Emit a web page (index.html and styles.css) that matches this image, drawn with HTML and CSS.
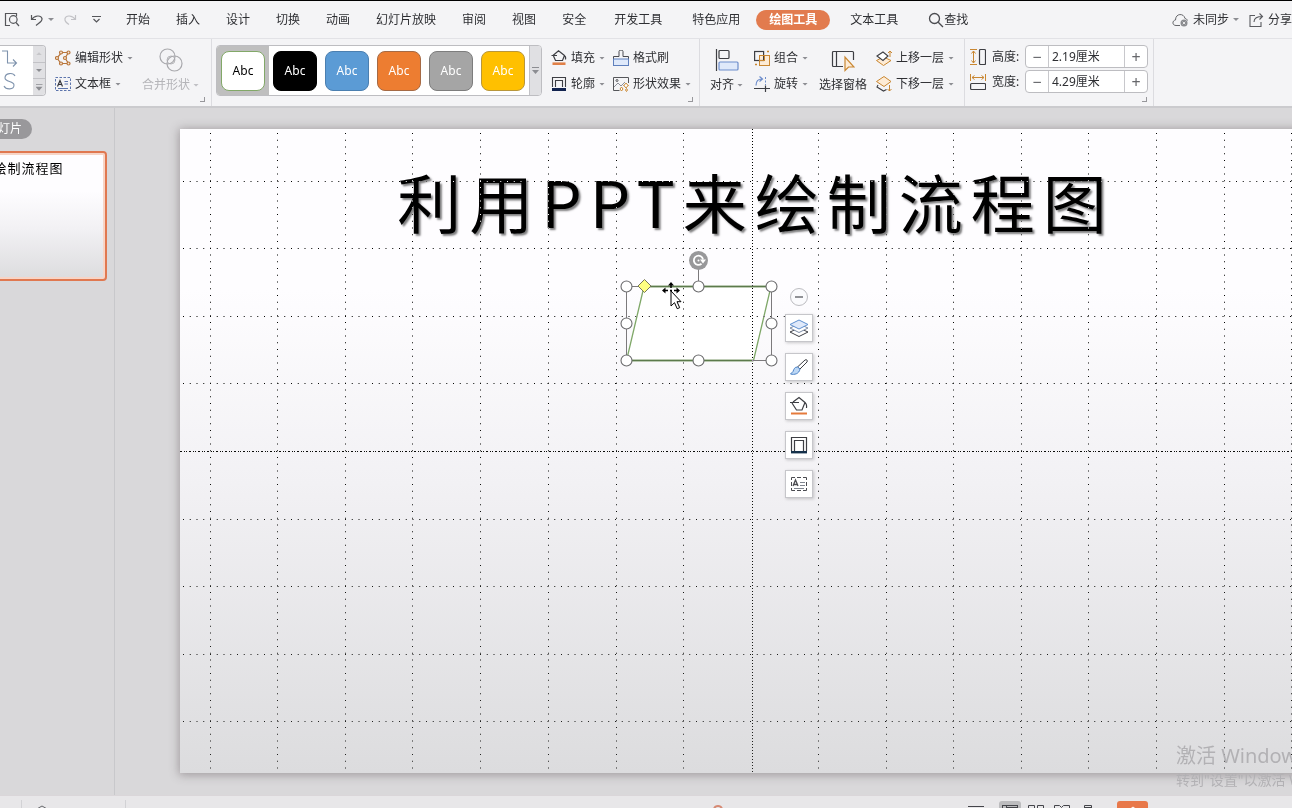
FILE: index.html
```html
<!DOCTYPE html>
<html lang="zh-CN">
<head>
<meta charset="utf-8">
<meta name="viewport" content="width=device-width, initial-scale=1">
<title>利用PPT来绘制流程图</title>
<link rel="stylesheet" href="styles.css">
</head>
<body>
<div class="app">
  <header class="menubar">
    <div class="quick">
      <button class="icon-btn" aria-label="打印预览"><svg width="16" height="16" viewBox="0 0 16 16" fill="none" stroke="#55565a" stroke-width="1.2"><path d="M6 13.5H1.5V1.5h11v3"/><circle cx="9.3" cy="7.5" r="3.8"/><path d="M12 10.5l3 3.5"/></svg></button>
      <button class="icon-btn undo" aria-label="撤销"><svg width="14" height="14" viewBox="0 0 14 14" fill="none" stroke="#55565a" stroke-width="1.2"><path d="M1.5 2v4.500h4.500M1.500 6.500C5 2 11 2 12 5.500c.6 3-3 4.500-6 7"/></svg><i class="caret"></i></button>
      <button class="icon-btn redo" aria-label="恢复"><svg width="14" height="14" viewBox="0 0 14 14" fill="none" stroke="#c2c2c6" stroke-width="1.2"><path d="M12.500 2v4.500H8M12.500 6.500C9 2 3 2 2 5.500c-.6 3 1.500 4.500 4 6"/></svg></button>
      <button class="icon-btn more" aria-label="自定义快速访问"><svg width="9" height="9" viewBox="0 0 9 9" fill="none" stroke="#55565a" stroke-width="1.200"><path d="M0 1.500h9M1.500 4l3 3 3-3"/></svg></button>
    </div>
    <nav class="tabs">
      <button class="tab">开始</button><button class="tab">插入</button><button class="tab">设计</button><button class="tab">切换</button><button class="tab">动画</button><button class="tab">幻灯片放映</button><button class="tab">审阅</button><button class="tab">视图</button><button class="tab">安全</button><button class="tab wide">开发工具</button><button class="tab wide">特色应用</button><button class="tab active">绘图工具</button><button class="tab wide">文本工具</button>
      <button class="tab find"><svg width="16" height="16" viewBox="0 0 16 16" fill="none" stroke="#4a4b50" stroke-width="1.300"><circle cx="6.500" cy="6.500" r="5"/><path d="M10.200 10.200L15 15"/></svg>查找</button>
    </nav>
    <div class="account">
      <button class="icon-btn"><svg width="17" height="14" viewBox="0 0 17 14" fill="none" stroke="#66676b"><path d="M8 12.500H4C0 12.500 0 7.500 3.500 7 3.500 0 12 0 13 5.500c1 0 2 .8 2.500 2"/><circle cx="12" cy="10" r="3.500" fill="#8a8b8f" stroke="none"/><path d="M10.700 8.700l2.600 2.600M13.300 8.700l-2.600 2.600" stroke="#fff" stroke-width=".8"/></svg><span>未同步</span><i class="caret"></i></button>
      <button class="icon-btn share"><svg width="15" height="14" viewBox="0 0 15 14" fill="none" stroke="#5a5b60" stroke-width="1.100"><path d="M6 2.500H1v11h11V9M5 9c0-4 3-5.500 8.500-5.500M10.500 .5l3 3-3 3"/></svg><span>分享</span></button>
    </div>
  </header>

  <section class="ribbon">
    <div class="group shapes">
      <div class="shape-box">
        <svg width="33" height="49" viewBox="0 0 33 49" fill="none" stroke="#7f93ad" stroke-width="1.100"><path d="M2 5h5.500v12h9M13 13.500l3.500 3.500-3.500 3.500"/><path d="M15 30c-2-4-10-3-10 2 0 4 9 3 9 7 0 5-8 5-10 1"/></svg>
        <div class="scroller"><button aria-label="上一行"><i class="caret up"></i></button><button aria-label="下一行"><i class="caret"></i></button><button aria-label="更多形状"><i class="caret lined"></i></button></div>
      </div>
      <div class="col edit-col">
        <button class="cmd"><svg width="16" height="16" viewBox="0 0 16 16" fill="none" stroke="#b8763c" stroke-width="1.200"><path d="M13.500 2.500h-7L2 8l4 5.500h7.500L10 8z"/><g fill="#fbe9d8"><circle cx="6" cy="2.500" r="1.500"/><circle cx="13.500" cy="2.500" r="1.500"/><circle cx="2" cy="8" r="1.500"/><circle cx="10" cy="8" r="1.500"/><circle cx="6" cy="13.500" r="1.500"/><circle cx="13.500" cy="13.500" r="1.500"/></g></svg><span>编辑形状</span><i class="caret"></i></button>
        <button class="cmd"><svg width="16" height="16" viewBox="0 0 16 16" fill="none" stroke="#5d75ad"><rect x=".5" y="1.500" width="15" height="13" stroke-dasharray="2.500 1.500"/><path d="M2.500 10.500L5 4.500l2.500 6M3.500 8.500h3" stroke="#33343a" stroke-width="1.200"/><path d="M9.500 5.500H13M9.500 8H13M3 12.500h10"/></svg><span>文本框</span><i class="caret"></i></button>
      </div>
      <button class="big disabled"><svg width="24" height="24" viewBox="0 0 24 24" fill="none" stroke="#a9a9ad" stroke-width="1.200"><circle cx="8.500" cy="8.500" r="7.500"/><circle cx="15.500" cy="15.500" r="7.500"/><circle cx="12" cy="12" r="4" stroke-width=".8"/></svg><span class="big-label">合并形状<i class="caret"></i></span></button>
      <i class="launcher"></i>
    </div>

    <div class="group styles">
      <div class="style-box">
        <div class="cell selected"><button class="swatch s-line">Abc</button></div>
        <div class="cell"><button class="swatch s-black">Abc</button></div>
        <div class="cell"><button class="swatch s-blue">Abc</button></div>
        <div class="cell"><button class="swatch s-orange">Abc</button></div>
        <div class="cell"><button class="swatch s-gray">Abc</button></div>
        <div class="cell"><button class="swatch s-gold">Abc</button></div>
        <button class="style-more" aria-label="更多样式"><i class="caret lined"></i></button>
      </div>
      <div class="col">
        <button class="cmd"><svg width="16" height="16" viewBox="0 0 16 16" fill="none" stroke="#3d3e43" stroke-width="1.200"><path d="M.5 5.500H6M2 5.500L7.500 .8l6 4.700-2 5H4.500L2.500 6M13 5.500c1.500.5 2 1.500 1.500 4"/><path d="M1.500 13.700h13" stroke="#e08048" stroke-width="2.600"/></svg><span>填充</span><i class="caret"></i></button>
        <button class="cmd"><svg width="16" height="16" viewBox="0 0 16 16" fill="none" stroke="#3d3e43" stroke-width="1.100"><path d="M1.500 11V1.500h13V11M4.500 11V4.500h7V11"/><path d="M1 13.500h14" stroke="#12234f" stroke-width="3"/></svg><span>轮廓</span><i class="caret"></i></button>
      </div>
      <div class="col">
        <button class="cmd"><svg width="16" height="16" viewBox="0 0 16 16" fill="none" stroke="#4a4b50"><path d="M.5 10V6.500h5.500v-5a2 1.500 0 0 1 4 0v5h5.500V10"/><rect x=".5" y="9" width="15" height="6.500" fill="#dfe9fa" stroke="#5f80bd"/></svg><span>格式刷</span></button>
        <button class="cmd"><svg width="16" height="16" viewBox="0 0 16 16" fill="none" stroke="#55565a"><path d="M15.500 7V1.500H.5v13h6"/><path d="M1 11l4-4 3 3 4-4" stroke="#8d9099"/><circle cx="4" cy="4.500" r="1"/><path d="M13 7l1 1.500 1.500 1-1.500 1-1 1.500-1-1.500-1.500-1 1.500-1zM8.500 11l1.500 2-1.500 2L7 13zM13.500 12.500l1 1.500-1 1.500-1-1.500z" fill="#fff" stroke="#c98732"/></svg><span>形状效果</span><i class="caret"></i></button>
      </div>
      <i class="launcher"></i>
    </div>

    <div class="group arrange">
      <button class="big"><svg width="24" height="24" viewBox="0 0 24 24" fill="none" stroke="#3d3e43" stroke-width="1.200"><path d="M1.500 1v22"/><rect x="4" y="2.500" width="10" height="8" rx="1"/><rect x="4" y="14" width="19" height="8" rx="1" fill="#dfe9fa" stroke="#6d8dcb"/></svg><span class="big-label">对齐<i class="caret"></i></span></button>
      <div class="col">
        <button class="cmd"><svg width="16" height="16" viewBox="0 0 16 16" fill="none"><rect x="5.500" y="5.500" width="10" height="10" fill="#fdebd5" stroke="#c98732"/><rect x=".6" y="1.500" width="9" height="9" stroke="#3d3e43" stroke-width="1.200"/><rect x="5.500" y="5.500" width="5" height="5" stroke="#c98732"/><path d="M13 1.500h2M1 14.500h2" stroke="#c98732" stroke-width="1.500"/></svg><span>组合</span><i class="caret"></i></button>
        <button class="cmd"><svg width="16" height="16" viewBox="0 0 16 16" fill="none"><path d="M2 9.500C2 5 4 3 8 3M5.500 .5L8.500 3l-3 2.500" stroke="#6d8dcb" stroke-width="1.200"/><path d="M11.500 1v8" stroke="#6d8dcb" stroke-dasharray="2 1.500"/><path d="M0 12.500h16M11.500 9.500V16M9.500 12.500h4" stroke="#3d3e43" stroke-width="1.200"/></svg><span>旋转</span><i class="caret"></i></button>
      </div>
      <button class="big"><svg width="24" height="24" viewBox="0 0 24 24" fill="none" stroke="#3d3e43" stroke-width="1.200"><path d="M12 18.500H2.500a1 1 0 0 1-1-1v-13a1 1 0 0 1 1-1h19a1 1 0 0 1 1 1V12M5.500 3.500v15"/><path d="M14 9v13.500l3.500-3.500h5.500z" fill="#fdebd5" stroke="#c98732"/></svg><span class="big-label">选择窗格</span></button>
      <div class="col">
        <button class="cmd"><svg width="16" height="16" viewBox="0 0 16 16" fill="none"><path d="M.5 10.500L7.500 7l7.500 3.500-7.500 5z" fill="#fdebd5" stroke="#c98732"/><path d="M1 6l6-4 5 4-5 4.500z" fill="#fff" stroke="#3d3e43" stroke-width="1.100"/><path d="M14 7V1M12 3l2-2 2 2" stroke="#c98732"/></svg><span>上移一层</span><i class="caret"></i></button>
        <button class="cmd"><svg width="16" height="16" viewBox="0 0 16 16" fill="none"><path d="M2 9l-1 2 6.500 4 3-1.500" stroke="#3d3e43" stroke-width="1.100"/><path d="M.5 5.500l7.500-5 7 5-7 5z" fill="#fdebd5" stroke="#c98732"/><path d="M13.500 9v6M11.500 13l2 2 2-2" stroke="#c98732"/></svg><span>下移一层</span><i class="caret"></i></button>
      </div>
    </div>

    <div class="group size">
      <div class="size-row">
        <svg width="16" height="18" viewBox="0 0 16 18" fill="none"><path d="M0 1.500h7M0 16.500h7M3.500 3v12M1.500 5.500L3.500 3l2 2.500M1.500 12.500l2 2.500 2-2.500" stroke="#c98732"/><rect x="9.500" y="1.500" width="6" height="15" rx="1" stroke="#3d3e43" stroke-width="1.200"/></svg>
        <label for="shape-h">高度:</label>
        <div class="spin"><button aria-label="减小高度">−</button><input id="shape-h" type="text" value="2.19厘米"><button aria-label="增大高度">+</button></div>
      </div>
      <div class="size-row">
        <svg width="16" height="18" viewBox="0 0 16 18" fill="none"><path d="M.5 1v7M15.500 1v7M2 4.500h12M4.500 2.500L2 4.500l2.500 2M11.500 2.500l2.500 2-2.500 2" stroke="#c98732"/><rect x=".6" y="10.500" width="15" height="6" rx="1" stroke="#3d3e43" stroke-width="1.200"/></svg>
        <label for="shape-w">宽度:</label>
        <div class="spin"><button aria-label="减小宽度">−</button><input id="shape-w" type="text" value="4.29厘米"><button aria-label="增大宽度">+</button></div>
      </div>
      <i class="launcher"></i>
    </div>
  </section>

  <main class="workspace">
    <aside class="panel">
      <button class="panel-tab">幻灯片</button>
      <div class="thumb"><span>利用PPT来绘制流程图</span></div>
    </aside>
    <div class="stage">
      <article class="slide">
        <h1 class="slide-title">利用PPT来绘制流程图</h1>
        <svg class="shape" width="170" height="134" viewBox="0 0 170 134" fill="none">
          <path d="M30 40.500H157L139.500 114.500H12.500z" fill="#fff" stroke="#7fa868" stroke-width="1.300"/>
          <path d="M12.500 40.500h145v74h-145zM84.500 20v20" stroke="#7c7a7c"/>
          <path d="M32 40.500h125M13 114.500h126" stroke="#5c7a4c" stroke-width="1.300"/>
          <g fill="#fff" stroke="#6c6c6e" stroke-width="1.100"><circle cx="12.500" cy="40.500" r="5.500"/><circle cx="84.500" cy="40.500" r="5.500"/><circle cx="157.500" cy="40.500" r="5.500"/><circle cx="12.500" cy="77.500" r="5.500"/><circle cx="157.500" cy="77.500" r="5.500"/><circle cx="12.500" cy="114.500" r="5.500"/><circle cx="84.500" cy="114.500" r="5.500"/><circle cx="157.500" cy="114.500" r="5.500"/></g>
          <path d="M30.500 33.500l6.500 6.500-6.500 6.500-6.500-6.500z" fill="#ffff80" stroke="#77775a"/>
          <circle cx="84.500" cy="14.500" r="9.500" fill="#98989a"/><path d="M87.500 17.800A4.600 4.600 0 1 1 89 13.500" stroke="#fff" stroke-width="1.800"/><path d="M86 13.500h6l-3 4z" fill="#fff"/><circle cx="84.500" cy="14.500" r="1" fill="#fff"/>
        </svg>
        <svg class="guides" aria-hidden="true"><g stroke="#fff"><svg x="50%" width="1" height="100%" overflow="visible"><path d="M.5 0V2000" class="axis"/><path class="dots" d="M-68.500 4V2000M-135.500 4V2000M-203.500 4V2000M-271.500 4V2000M-339.500 4V2000M-406.500 4V2000M-474.500 4V2000M-541.500 4V2000M66.500 4V2000M134.500 4V2000M201.500 4V2000M269.500 4V2000M336.500 4V2000M404.500 4V2000M472.500 4V2000M539.500 4V2000"/></svg><svg y="50%" width="100%" height="1" overflow="visible"><path d="M0 .5H3000" class="axis-h"/><path class="dots" d="M3 -269.500H3000M3 -202.500H3000M3 -134.500H3000M3 -67.500H3000M3 68.500H3000M3 135.500H3000M3 203.500H3000M3 270.500H3000"/></svg></g></svg>
        <svg class="pointer" width="20" height="28" viewBox="0 0 20 28"><path d="M9 0l3 3.500H6zM0 8.500l3.500-3v6zM18 8.500l-3.500-3v6z" fill="#000"/><path d="M3 8.500h3M12 8.500h3M9 3v3M8 8.500h2" stroke="#000" stroke-width="1.500"/><path d="M9 9v15l3.500-3.300 2.700 6 2.500-1-2.700-6H19z" fill="#fff" stroke="#000"/></svg>
        <div class="float-bar">
          <button class="collapse" aria-label="收起"><svg width="18" height="18" viewBox="0 0 18 18" fill="#fbfbfd"><circle cx="9" cy="9" r="8.500" stroke="#bcbcc0"/><path d="M5 9h8" stroke="#77787c" stroke-width="1.600"/></svg></button>
          <button class="tool" aria-label="叠放次序"><svg width="20" height="20" viewBox="0 0 20 20" fill="#fff"><path d="M1 14l9-4 9 4-9 4.500z" stroke="#3d3e43"/><path d="M1 10l9-4 9 4-9 4.500z" stroke="#7c8ba5"/><path d="M1 6.500L10 2l9 4.500-9 4.500z" fill="#dfe9fa" stroke="#5c8fd0"/></svg></button>
          <button class="tool" aria-label="形状样式"><svg width="20" height="20" viewBox="0 0 20 20" fill="#fff"><path d="M8.500 10L16 3c1.500-1 3 .5 2 2L11 12z" stroke="#3d3e43"/><path d="M8.500 10c-3 0-3.500 2-4.500 4.500L1.500 17c4 1 8.500 0 9.500-5z" fill="#bcd7f5" stroke="#4b82c6"/></svg></button>
          <button class="tool" aria-label="形状填充"><svg width="20" height="20" viewBox="0 0 20 20" fill="none"><path d="M1 6.500h9M4 6L10 1.500l6 5-3 7.500H7.500L3 7M15 6c2 1 3 3 2.500 6" stroke="#3d3e43" stroke-width="1.200"/><path d="M2 17.500h16" stroke="#e57a3c" stroke-width="2"/></svg></button>
          <button class="tool" aria-label="形状轮廓"><svg width="20" height="20" viewBox="0 0 20 20" fill="none"><path d="M2.500 16V2.500h15V16M5.500 16V5.500h9V16" stroke="#3d3e43" stroke-width="1.200"/><path d="M2 17.200h16" stroke="#14304a" stroke-width="2.400"/></svg></button>
          <button class="tool" aria-label="文本框"><svg width="20" height="20" viewBox="0 0 20 20" fill="none" stroke="#4a4b50"><path d="M2.500 6V3.500H6M8 3.500h4M14 3.500h3.500V6M17.500 8v4M17.500 14v2.500H14M12 16.500H8M6 16.500H2.500V14M2.500 12V8"/><path d="M4 12L6.500 6 9 12M5 10.500h3" stroke-width="1.300"/><path d="M11 8.500h5M11 11.500h5M5 14.500h10" stroke="#7f858f"/></svg></button>
        </div>
      </article>
    </div>
    <div class="watermark"><p class="wm-title">激活 Windows</p><p class="wm-note">转到"设置"以激活 Windows。</p></div>
  </main>

  <footer class="statusbar">
    <div class="status-left"><i class="sep"></i><svg width="16" height="16" viewBox="0 0 16 16" fill="none" stroke="#66676b"><path d="M1 5l7-4 7 4v8H1z"/></svg><i class="sep"></i></div>
    <svg class="status-mid" width="10" height="10" viewBox="0 0 10 10" fill="none" stroke="#d68a74" stroke-width="2"><path d="M1 5c1-4 7-4 8 0v4"/></svg>
    <div class="views">
      <button aria-label="备注"><svg width="16" height="16" viewBox="0 0 16 16" stroke="#44454a"><path d="M0 5.500h16M0 9.500h16"/></svg></button>
      <button class="on" aria-label="普通视图"><svg width="16" height="16" viewBox="0 0 16 16" fill="none" stroke="#44454a"><rect x=".5" y="4.500" width="15" height="10"/><path d="M4.500 5v9M5 6.500h10"/></svg></button>
      <button aria-label="幻灯片浏览"><svg width="16" height="16" viewBox="0 0 16 16" fill="none" stroke="#44454a"><path d="M.5 4.500h6v5h-6zM9.500 4.500h6v5h-6z"/></svg></button>
      <button aria-label="阅读视图"><svg width="16" height="16" viewBox="0 0 16 16" fill="none" stroke="#44454a"><path d="M.5 4.500h5l2 2 2-2h6v9H.5z"/></svg></button>
      <button aria-label="备注页"><svg width="16" height="16" viewBox="0 0 16 16" fill="none" stroke="#44454a"><path d="M4.500 7V4.500h7V9M5 6.500h6"/></svg></button>
      <button class="play" aria-label="放映"><svg width="10" height="16" viewBox="0 0 10 16" fill="none" stroke="#fff"><path d="M1 9l4-3 4 3v6z"/></svg></button>
    </div>
  </footer>
</div>
</body>
</html>
```
FILE: styles.css
```css
* { box-sizing: border-box; }
html, body { height: 100%; margin: 0; }
body {
  overflow: hidden;
  font: 12px/16px "Noto Sans", "Noto Sans CJK SC", sans-serif;
  color: #2e2f33;
  background: #d9d8da;
}
button {
  margin: 0; padding: 0; border: 0;
  background: none; color: inherit; font: inherit;
  white-space: nowrap;
}
svg { display: block; flex: none; }
p, h1 { margin: 0; }

.app { display: flex; flex-direction: column; height: 100vh; border-top: 1px solid #000; }

.caret {
  display: inline-block; flex: none;
  width: 6px; height: 3px;
  background: #8c8d92;
  clip-path: polygon(0 0, 100% 0, 50% 100%);
}
.caret.up { background: #c6c6c9; clip-path: polygon(0 100%, 100% 100%, 50% 0); }
.caret.lined { width: 7px; height: 7px; clip-path: polygon(0 0, 100% 0, 100% 1px, 0 1px, 0 3px, 100% 3px, 50% 100%, 0 3px); }

/* menu bar */
.menubar {
  display: flex; align-items: center; flex: none;
  height: 38px;
  background: #f4f4f6;
  border-bottom: 1px solid #e2e2e6;
}
.icon-btn { display: flex; align-items: center; gap: 4px; }
.quick { display: flex; align-items: center; flex: none; width: 113px; padding-left: 4px; }
.undo { margin-left: 10px; }
.redo { margin-left: 9px; }
.more { margin-left: 15px; }
.tabs { display: flex; align-items: center; }
.tab { height: 20px; padding: 0 13px; }
.tab.wide { padding: 0 15px; }
.tab.active {
  margin: 0 5px 0 1px;
  border-radius: 10px;
  background: #e27b4e; color: #fff; font-weight: 700;
}
.tab.find { display: flex; align-items: center; padding-left: 15px; }
.account { display: flex; align-items: center; gap: 10px; flex: none; margin-left: auto; }

/* ribbon */
.ribbon {
  display: flex; flex: none;
  height: 69px;
  background: #f4f4f6;
  border-bottom: 2px solid #cbcbce;
}
.group {
  position: relative;
  display: flex; align-items: flex-start; flex: none;
  padding-top: 6px;
  border-right: 1px solid #dcdce0;
}
.launcher {
  position: absolute; right: 6px; bottom: 4px;
  width: 5px; height: 5px;
  border: solid #97979b; border-width: 0 1px 1px 0;
}
.col { display: flex; flex-direction: column; }
.cmd { display: flex; align-items: center; gap: 4px; height: 26px; }
.big { display: flex; flex-direction: column; align-items: center; gap: 5px; padding-top: 3px; }
.big-label { display: flex; align-items: center; gap: 3px; }
.disabled { color: #b4b4b8; }
.disabled .caret { background: #c0c0c4; }

.shapes { gap: 9px; width: 212px; }
.shape-box {
  display: flex;
  width: 46px; height: 51px;
  border: 1px solid #bdbdc1; border-left: 0; border-radius: 0 4px 4px 0;
  background: #fff; overflow: hidden;
}
.scroller {
  display: flex; flex-direction: column; flex: 1;
  background: #e0e0e3;
}
.scroller button { display: flex; flex: 1; align-items: center; justify-content: center; border-top: 1px solid #c2c2c6; }
.scroller button:first-child { border-top: 0; }

.styles { gap: 9px; width: 488px; padding-left: 4px; }
.style-box {
  display: flex;
  height: 51px;
  border: 1px solid #bdbdc1; border-radius: 4px;
  background: #fff; overflow: hidden;
}
.cell { display: flex; align-items: center; justify-content: center; width: 52px; }
.cell.selected { background: #bfbfbf; }
.swatch { width: 44px; height: 40px; border: 1px solid; border-radius: 8px; color: #fff; }
.s-line { background: #fff; border-color: #82a868; color: #000; }
.s-black { background: #000; border-color: #000; }
.s-blue { background: #5b9bd5; border-color: #4b7fb0; }
.s-orange { background: #ed7d31; border-color: #a56a45; }
.s-gray { background: #a5a5a5; border-color: #7d7d7d; }
.s-gold { background: #ffc000; border-color: #b8963a; }
.style-more { display: flex; align-items: center; justify-content: center; width: 12px; background: #e0e0e3; border-left: 1px solid #c2c2c6; }
.styles .col + .col { margin-left: -1px; }

.arrange { gap: 11px; width: 265px; padding-left: 10px; }
.arrange .col:last-child { margin-left: -2px; }

.size { flex-direction: column; gap: 2px; width: 189px; padding: 6px 0 0 5px; }
.size-row { display: flex; align-items: center; }
.size-row label { width: 33px; margin: 0 0 0 6px; }
.spin {
  display: flex;
  width: 123px; height: 23px;
  border: 1px solid #bdbdc1; border-radius: 4px;
  background: #fff; overflow: hidden;
}
.spin button { flex: 0 0 22px; font-size: 16px; line-height: 20px; color: #66676b; }
.spin input {
  flex: 1; min-width: 0; padding: 0 3px;
  border: solid #c8c8cc; border-width: 0 1px;
  background: none; color: inherit; font: inherit;
}

/* workspace */
.workspace { position: relative; display: flex; flex: 1; min-height: 0; }
.panel {
  flex: none; width: 115px; padding-top: 11px;
  border-right: 1px solid #c8c8cb;
  overflow: hidden;
}
.panel-tab {
  display: block;
  height: 20px; margin-left: -26px; padding: 0 10px 0 12px;
  border-radius: 10px;
  background: #99989b; color: #fff;
}
.thumb {
  width: 231px; height: 130px; margin: 12px 0 0 -124px; padding: 7px 0 0 6px;
  border: 2px solid #e07850; border-radius: 4px;
  box-shadow: inset 0 0 0 2px #f7d5c7;
  background: linear-gradient(#fefdff 30%, #f2f1f4 60%, #dcdcde);
  color: #000; font-size: 13px; text-align: center; letter-spacing: 1px;
  white-space: nowrap;
}
.stage { display: flex; flex: 1; min-width: 0; padding: 21px 0 22px 65px; overflow: hidden; }
.slide {
  position: relative;
  flex: 1; margin-right: -32px;
  background: linear-gradient(#fefdff 25%, #f2f1f4 55%, #dcdcde);
  box-shadow: 0 1px 9px 1px rgba(90, 80, 85, .45);
}
.slide-title {
  padding: 26px 0 0 8px;
  color: #000; font-size: 64px; line-height: 90px; font-weight: 400;
  font-family: "Noto Sans CJK SC", sans-serif;
  letter-spacing: 8px; text-align: center; white-space: nowrap;
  text-shadow: 2px 2px 2px rgba(0, 0, 0, .5);
}
.shape { position: absolute; left: calc(50% - 138px); top: 117px; }
.guides { position: absolute; inset: 0; width: 100%; height: 100%; mix-blend-mode: difference; }
.dots { stroke-dasharray: 1 5.75; }
.axis { stroke-dasharray: 1 2; }
.axis-h { stroke-dasharray: 2 2 1 1 1 2; }
.pointer { position: absolute; left: calc(50% - 90px); top: 153px; }
.float-bar {
  position: absolute; left: calc(50% + 33px); top: 159px;
  display: flex; flex-direction: column; align-items: center; gap: 11px;
}
.collapse { height: 15px; }
.tool {
  display: grid; place-items: center;
  width: 28px; height: 28px;
  border: 1px solid #c6c6ca;
  background: #fff;
  box-shadow: 1px 1px 3px rgba(0, 0, 0, .2);
}
.watermark {
  position: absolute; left: calc(100% - 116px); right: 0; bottom: 5px;
  color: #b2b1b4; white-space: nowrap; overflow: hidden;
}
.wm-title { font-size: 20px; line-height: 28px; }
.wm-note { font-size: 14px; line-height: 20px; }

/* status bar */
.statusbar {
  display: flex; flex: none; justify-content: space-between;
  height: 13px;
  background: #e8e7e9; border-top: 1px solid #dad6d9;
  overflow: hidden;
}
.status-left { display: flex; gap: 12px; padding: 4px 0 0 21px; }
.status-left svg { margin: 5px 63px 0 0; }
.sep { width: 1px; height: 20px; background: #d2d2d5; }
.status-mid { margin: 8px 0 0 344px; }
.views { display: flex; gap: 4px; padding: 5px 144px 0 0; }
.views button { display: grid; place-items: start center; flex: none; width: 22px; height: 22px; border-radius: 3px; }
.views .on { background: #bcbcbe; }
.views .play { width: 31px; margin-left: 14px; background: #e8784a; }
.views button:first-child { margin-right: 8px; }
```
